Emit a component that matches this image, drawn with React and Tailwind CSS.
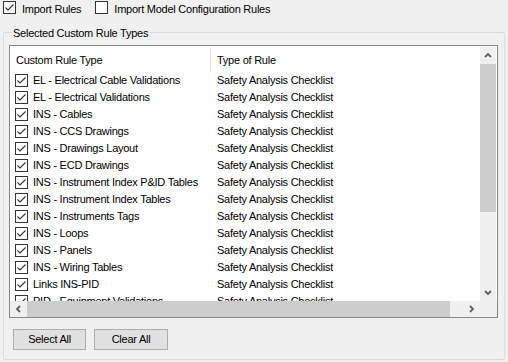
import React from 'react';

const rules = [
  'EL - Electrical Cable Validations',
  'EL - Electrical Validations',
  'INS - Cables',
  'INS - CCS Drawings',
  'INS - Drawings Layout',
  'INS - ECD Drawings',
  'INS - Instrument Index P&ID Tables',
  'INS - Instrument Index Tables',
  'INS - Instruments Tags',
  'INS - Loops',
  'INS - Panels',
  'INS - Wiring Tables',
  'Links INS-PID',
  'PID - Equipment Validations',
];

function Check({ checked }) {
  return (
    <svg width="13" height="13" viewBox="0 0 13 13" className="shrink-0">
      <rect x="0.5" y="0.5" width="12" height="12" fill="#fff" stroke="#333" />
      {checked && <path d="M2.5 6.5 L5 9 L10.5 3.5" fill="none" stroke="#333" strokeWidth="1.1" />}
    </svg>
  );
}

function Arrow({ dir }) {
  const d = {
    up: 'M1 5 L4 2 L7 5',
    down: 'M1 2 L4 5 L7 2',
    left: 'M5 1 L2 4 L5 7',
    right: 'M2 1 L5 4 L2 7',
  }[dir];
  return (
    <svg width="8" height="8" viewBox="0 0 8 8">
      <path d={d} fill="none" stroke="#606060" strokeWidth="1.8" />
    </svg>
  );
}

export default function App() {
  return (
    <div
      className="w-[508px] h-[362px] bg-[#f0f0f0] text-black text-[11px] tracking-[-0.25px] leading-[13px] overflow-hidden"
      style={{ fontFamily: '"Liberation Sans", Arial, sans-serif' }}
    >
      <div className="flex items-center h-[13px] mt-px">
        <div className="flex items-center ml-[3px]">
          <Check checked />
          <span className="ml-[6px] mt-[3px]">Import Rules</span>
        </div>
        <div className="flex items-center ml-[14px]">
          <Check />
          <span className="ml-[6px] mt-[3px]">Import Model Configuration Rules</span>
        </div>
      </div>

      <div className="relative ml-[3px] mt-[18px] w-[502px] h-[328px] border border-[#dcdcdc] rounded-[2px]">
        <span className="absolute left-[8px] top-[-6px] px-px bg-[#f0f0f0]">Selected Custom Rule Types</span>

        <div className="ml-[5px] mt-[12px] w-[489px] h-[273px] border border-[#828790] bg-white flex flex-col">
          <div className="flex flex-1 min-h-0 pt-px">
            <div className="w-[470px] overflow-hidden pt-px">
              <div className="flex h-[24px] items-center">
                <div className="w-[201px] pl-[6px] h-full flex items-center border-r border-[#e5e5e5]">Custom Rule Type</div>
                <div className="pl-[6px]">Type of Rule</div>
              </div>
              {rules.map((r) => (
                <div key={r} className="flex h-[17px] items-center">
                  <div className="w-[202px] pl-[5px] flex items-center whitespace-nowrap">
                    <Check checked />
                    <span className="ml-[5px]">{r}</span>
                  </div>
                  <div className="pl-[5px] whitespace-nowrap">Safety Analysis Checklist</div>
                </div>
              ))}
            </div>
            <div className="w-[16px] bg-[#f0f0f0] flex flex-col">
              <div className="h-[17px] flex items-center justify-center"><Arrow dir="up" /></div>
              <div className="h-[148px] bg-[#cdcdcd]" />
              <div className="flex-1" />
              <div className="h-[17px] flex items-center justify-center"><Arrow dir="down" /></div>
            </div>
          </div>
          <div className="flex h-[16px] bg-[#f0f0f0]">
            <div className="w-[17px] flex items-center justify-center"><Arrow dir="left" /></div>
            <div className="w-[423px] bg-[#cdcdcd]" />
            <div className="flex-1" />
            <div className="w-[17px] flex items-center justify-center"><Arrow dir="right" /></div>
            <div className="w-[17px]" />
          </div>
        </div>

        <div className="flex gap-[8px] ml-[9px] mt-[11px]">
          <button className="w-[73px] h-[21px] bg-[#e1e1e1] border border-[#adadad] text-[11px] leading-[13px]">Select All</button>
          <button className="w-[74px] h-[21px] bg-[#e1e1e1] border border-[#adadad] text-[11px] leading-[13px]">Clear All</button>
        </div>
      </div>
    </div>
  );
}
